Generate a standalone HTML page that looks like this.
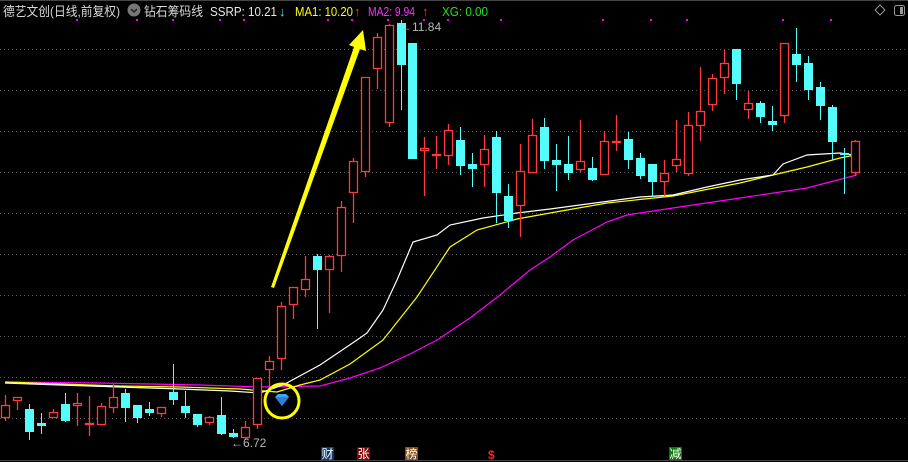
<!DOCTYPE html>
<html><head><meta charset="utf-8"><style>
html,body{margin:0;padding:0;background:#000;width:908px;height:462px;overflow:hidden}
svg{display:block}
text{font-family:"Liberation Sans","Noto Sans CJK SC",sans-serif}
</style></head><body>
<svg width="908" height="462" viewBox="0 0 908 462" xmlns="http://www.w3.org/2000/svg">
<rect width="908" height="462" fill="#000"/>
<line x1="0" y1="0.5" x2="908" y2="0.5" stroke="#444"/>
<line x1="0" y1="460.5" x2="908" y2="460.5" stroke="#444"/>
<g stroke="#555" stroke-dasharray="1,3">
<line x1="0" y1="49.5" x2="908" y2="49.5"/><line x1="0" y1="90.5" x2="908" y2="90.5"/>
<line x1="0" y1="131.5" x2="908" y2="131.5"/><line x1="0" y1="172.5" x2="908" y2="172.5"/>
<line x1="0" y1="213.5" x2="908" y2="213.5"/><line x1="0" y1="254.5" x2="908" y2="254.5"/>
<line x1="0" y1="295.5" x2="908" y2="295.5"/><line x1="0" y1="336.5" x2="908" y2="336.5"/>
<line x1="0" y1="377.5" x2="908" y2="377.5"/><line x1="0" y1="418.5" x2="908" y2="418.5"/>
</g>
<!-- header -->
<text x="3" y="16" fill="#d8d8d8" font-size="13" textLength="117" lengthAdjust="spacingAndGlyphs">德艺文创(日线,前复权)</text>
<circle cx="134" cy="10" r="6.5" fill="#777"/>
<polyline points="131,9 134,12 137,9" fill="none" stroke="#222" stroke-width="1.5"/>
<text x="144" y="16" fill="#d8d8d8" font-size="13" textLength="59" lengthAdjust="spacingAndGlyphs">钻石筹码线</text>
<text x="210" y="16" fill="#e8e8e8" font-size="13" textLength="67" lengthAdjust="spacingAndGlyphs">SSRP: 10.21</text>
<text x="279" y="16" fill="#54e8f0" font-size="13">↓</text>
<text x="295" y="16" fill="#ffff00" font-size="13" textLength="58" lengthAdjust="spacingAndGlyphs">MA1: 10.20</text>
<text x="354" y="16" fill="#ff3030" font-size="13">↑</text>
<text x="368" y="16" fill="#ff30ff" font-size="13" textLength="47" lengthAdjust="spacingAndGlyphs">MA2: 9.94</text>
<text x="422" y="16" fill="#ff3030" font-size="13">↑</text>
<text x="442" y="16" fill="#20e020" font-size="13" textLength="46" lengthAdjust="spacingAndGlyphs">XG: 0.00</text>
<g fill="#ff00ff">
<rect x="76" y="19" width="2" height="2"/><rect x="136" y="19" width="2" height="2"/><rect x="172" y="19" width="2" height="2"/><rect x="219" y="19" width="2" height="2"/><rect x="243" y="19" width="2" height="2"/><rect x="327" y="19" width="2" height="2"/><rect x="351" y="19" width="2" height="2"/><rect x="387" y="19" width="2" height="2"/><rect x="423" y="19" width="2" height="2"/><rect x="447" y="19" width="2" height="2"/><rect x="500" y="19" width="2" height="2"/><rect x="602" y="19" width="2" height="2"/><rect x="650" y="19" width="2" height="2"/><rect x="686" y="19" width="2" height="2"/><rect x="782" y="19" width="2" height="2"/><rect x="830" y="19" width="2" height="2"/>
</g>
<polygon points="880,5 885,10 880,15 875,10" fill="none" stroke="#999"/>
<rect x="894.5" y="5.5" width="10" height="10" rx="2" fill="none" stroke="#999"/>
<rect x="900" y="7" width="3" height="7" fill="#999"/>
<!-- MA lines -->
<polyline fill="none" stroke="#ff00ff" stroke-width="1.2" points="5,382 100,383 150,384 200,385 260,387 320,386 350,378 380,368 410,354 437,340 470,318 500,295 530,270 550,257 573,240 607,222 627,215 673,208 740,198 807,188 853,176 857,174"/>
<polyline fill="none" stroke="#ffff00" stroke-width="1.2" points="5,382 60,384 120,386 180,387 240,389 277,392 300,385 320,380 350,364 383,340 417,297 450,247 477,230 517,219 550,213 607,203 673,196 740,183 773,175 807,167 840,158 855,155"/>
<polyline fill="none" stroke="#ffffff" stroke-width="1.2" points="5,383 60,385 120,387 180,389 230,391 260,393 283,385 320,365 357,340 367,333 383,310 397,280 413,242 437,235 450,225 483,218 517,213 550,209 640,197 673,195 707,187 740,180 773,175 783,164 807,155 823,154 840,153 853,155"/>
<!-- candles -->
<g stroke-width="1.3">
<g stroke="#ff3a3a" fill="#000">
<line x1="5.5" y1="395" x2="5.5" y2="421"/><rect x="1.5" y="405.5" width="8" height="12"/>
<line x1="17.5" y1="397" x2="17.5" y2="410"/><rect x="13.5" y="397.5" width="8" height="3"/>
<line x1="53.5" y1="409" x2="53.5" y2="418"/><rect x="49.5" y="412.5" width="8" height="5"/>
<line x1="77.5" y1="393" x2="77.5" y2="426"/><rect x="73.5" y="403.5" width="8" height="2"/>
<line x1="89.5" y1="396" x2="89.5" y2="436"/><rect x="85.5" y="423.5" width="8" height="1"/>
<line x1="101.5" y1="403" x2="101.5" y2="425"/><rect x="97.5" y="406.5" width="8" height="18"/>
<line x1="113.5" y1="384" x2="113.5" y2="413"/><rect x="109.5" y="397.5" width="8" height="10"/>
<line x1="161.5" y1="407" x2="161.5" y2="417"/><rect x="157.5" y="407.5" width="8" height="6"/>
<line x1="209.5" y1="416" x2="209.5" y2="425"/><rect x="205.5" y="417.5" width="8" height="5"/>
<line x1="245.5" y1="421" x2="245.5" y2="440"/><rect x="241.5" y="427.5" width="8" height="10"/>
<line x1="257.5" y1="378" x2="257.5" y2="429"/><rect x="253.5" y="378.5" width="8" height="46"/>
<line x1="269.5" y1="356" x2="269.5" y2="388"/><rect x="265.5" y="361.5" width="8" height="8"/>
<line x1="281.5" y1="302" x2="281.5" y2="370"/><rect x="277.5" y="306.5" width="8" height="52"/>
<line x1="293.5" y1="287" x2="293.5" y2="319"/><rect x="289.5" y="287.5" width="8" height="17"/>
<line x1="305.5" y1="256" x2="305.5" y2="297"/><rect x="301.5" y="279.5" width="8" height="10"/>
<line x1="329.5" y1="255" x2="329.5" y2="313"/><rect x="325.5" y="256.5" width="8" height="13"/>
<line x1="341.5" y1="201" x2="341.5" y2="272"/><rect x="337.5" y="207.5" width="8" height="48"/>
<line x1="353.5" y1="158" x2="353.5" y2="223"/><rect x="349.5" y="161.5" width="8" height="31"/>
<line x1="365.5" y1="77" x2="365.5" y2="177"/><rect x="361.5" y="77.5" width="8" height="94"/>
<line x1="377.5" y1="33" x2="377.5" y2="89"/><rect x="373.5" y="37.5" width="8" height="31"/>
<line x1="389.5" y1="24" x2="389.5" y2="127"/><rect x="385.5" y="25.5" width="8" height="97"/>
<line x1="424.5" y1="137" x2="424.5" y2="196"/><rect x="420.5" y="148.5" width="8" height="2"/>
<line x1="436.5" y1="136" x2="436.5" y2="169"/><rect x="432.5" y="154.5" width="8" height="1"/>
<line x1="448.5" y1="124" x2="448.5" y2="165"/><rect x="444.5" y="130.5" width="8" height="25"/>
<line x1="484.5" y1="135" x2="484.5" y2="187"/><rect x="480.5" y="149.5" width="8" height="15"/>
<line x1="520.5" y1="144" x2="520.5" y2="237"/><rect x="516.5" y="171.5" width="8" height="34"/>
<line x1="532.5" y1="119" x2="532.5" y2="172"/><rect x="528.5" y="135.5" width="8" height="37"/>
<line x1="580.5" y1="120" x2="580.5" y2="172"/><rect x="576.5" y="161.5" width="8" height="8"/>
<line x1="604.5" y1="131" x2="604.5" y2="174"/><rect x="600.5" y="141.5" width="8" height="33"/>
<line x1="616.5" y1="115" x2="616.5" y2="151"/><rect x="612.5" y="141.5" width="8" height="1"/>
<line x1="664.5" y1="160" x2="664.5" y2="196"/><rect x="660.5" y="173.5" width="8" height="8"/>
<line x1="676.5" y1="120" x2="676.5" y2="172"/><rect x="672.5" y="159.5" width="8" height="6"/>
<line x1="688.5" y1="112" x2="688.5" y2="176"/><rect x="684.5" y="125.5" width="8" height="48"/>
<line x1="700.5" y1="67" x2="700.5" y2="141"/><rect x="696.5" y="111.5" width="8" height="14"/>
<line x1="712.5" y1="74" x2="712.5" y2="111"/><rect x="708.5" y="78.5" width="8" height="26"/>
<line x1="724.5" y1="50" x2="724.5" y2="94"/><rect x="720.5" y="63.5" width="8" height="14"/>
<line x1="748.5" y1="91" x2="748.5" y2="119"/><rect x="744.5" y="103.5" width="8" height="6"/>
<line x1="784.5" y1="43" x2="784.5" y2="123"/><rect x="780.5" y="43.5" width="8" height="72"/>
<line x1="855.5" y1="140" x2="855.5" y2="176"/><rect x="851.5" y="141.5" width="8" height="31"/>
</g>
<g stroke="#54fcfc" fill="#54fcfc" stroke-width="1">
<line x1="29.5" y1="404" x2="29.5" y2="440"/><rect x="25.5" y="409.5" width="8" height="22"/>
<line x1="41.5" y1="413" x2="41.5" y2="434"/><rect x="37.5" y="423.5" width="8" height="2"/>
<line x1="65.5" y1="393" x2="65.5" y2="422"/><rect x="61.5" y="404.5" width="8" height="16"/>
<line x1="125.5" y1="389" x2="125.5" y2="422"/><rect x="121.5" y="393.5" width="8" height="14"/>
<line x1="137.5" y1="405" x2="137.5" y2="423"/><rect x="133.5" y="405.5" width="8" height="12"/>
<line x1="149.5" y1="402" x2="149.5" y2="416"/><rect x="145.5" y="409.5" width="8" height="3"/>
<line x1="173.5" y1="364" x2="173.5" y2="405"/><rect x="169.5" y="392.5" width="8" height="7"/>
<line x1="185.5" y1="391" x2="185.5" y2="418"/><rect x="181.5" y="406.5" width="8" height="6"/>
<line x1="197.5" y1="414" x2="197.5" y2="427"/><rect x="193.5" y="414.5" width="8" height="10"/>
<line x1="221.5" y1="397" x2="221.5" y2="435"/><rect x="217.5" y="415.5" width="8" height="18"/>
<line x1="233.5" y1="429" x2="233.5" y2="438"/><rect x="229.5" y="433.5" width="8" height="3"/>
<line x1="317.5" y1="254" x2="317.5" y2="329"/><rect x="313.5" y="256.5" width="8" height="13"/>
<line x1="401.5" y1="20" x2="401.5" y2="110"/><rect x="397.5" y="23.5" width="8" height="41"/>
<line x1="412.5" y1="43" x2="412.5" y2="158"/><rect x="408.5" y="43.5" width="8" height="115"/>
<line x1="460.5" y1="127" x2="460.5" y2="175"/><rect x="456.5" y="140.5" width="8" height="25"/>
<line x1="472.5" y1="153" x2="472.5" y2="187"/><rect x="468.5" y="164.5" width="8" height="4"/>
<line x1="496.5" y1="131" x2="496.5" y2="223"/><rect x="492.5" y="137.5" width="8" height="55"/>
<line x1="508.5" y1="184" x2="508.5" y2="228"/><rect x="504.5" y="196.5" width="8" height="24"/>
<line x1="544.5" y1="118" x2="544.5" y2="169"/><rect x="540.5" y="127.5" width="8" height="33"/>
<line x1="556.5" y1="144" x2="556.5" y2="191"/><rect x="552.5" y="160.5" width="8" height="4"/>
<line x1="568.5" y1="136" x2="568.5" y2="180"/><rect x="564.5" y="164.5" width="8" height="8"/>
<line x1="592.5" y1="157" x2="592.5" y2="181"/><rect x="588.5" y="168.5" width="8" height="11"/>
<line x1="628.5" y1="132" x2="628.5" y2="169"/><rect x="624.5" y="139.5" width="8" height="20"/>
<line x1="640.5" y1="153" x2="640.5" y2="179"/><rect x="636.5" y="158.5" width="8" height="17"/>
<line x1="652.5" y1="164" x2="652.5" y2="197"/><rect x="648.5" y="164.5" width="8" height="17"/>
<line x1="736.5" y1="49" x2="736.5" y2="100"/><rect x="732.5" y="49.5" width="8" height="34"/>
<line x1="760.5" y1="101" x2="760.5" y2="123"/><rect x="756.5" y="103.5" width="8" height="13"/>
<line x1="772.5" y1="106" x2="772.5" y2="131"/><rect x="768.5" y="121.5" width="8" height="3"/>
<line x1="796.5" y1="28" x2="796.5" y2="82"/><rect x="792.5" y="54.5" width="8" height="10"/>
<line x1="808.5" y1="56" x2="808.5" y2="100"/><rect x="804.5" y="63.5" width="8" height="26"/>
<line x1="820.5" y1="82" x2="820.5" y2="120"/><rect x="816.5" y="87.5" width="8" height="18"/>
<line x1="832.5" y1="105" x2="832.5" y2="160"/><rect x="828.5" y="107.5" width="8" height="34"/>
<line x1="844.5" y1="148" x2="844.5" y2="194"/><rect x="840.5" y="153.5" width="8" height="1"/>
</g>
</g>
<!-- arrow -->
<polygon points="271,287 354,47 349,45 363,30 366,51 360,49 274,288" fill="#ffff00"/>
<!-- labels -->
<text x="400" y="31" fill="#b8b8b8" font-size="12">←11.84</text>
<text x="231" y="447" fill="#b8b8b8" font-size="12">←6.72</text>
<!-- diamond signal -->
<circle cx="282" cy="401" r="17" fill="none" stroke="#ffff00" stroke-width="3"/>
<polygon points="275,397 278,394 286,394 289,397 282,406" fill="#3fa8f0"/>
<polygon points="275,397 289,397 282,406" fill="#2a7fd8"/>
<!-- bottom badges -->
<rect x="321" y="447" width="13" height="13" fill="#0d3c70"/>
<text x="321.5" y="458" fill="#fff" font-size="12">财</text>
<rect x="357" y="447" width="13" height="13" fill="#8a0000"/>
<text x="357.5" y="458" fill="#fff" font-size="12">张</text>
<rect x="405" y="447" width="13" height="13" fill="#8a4a10"/>
<text x="405.5" y="458" fill="#fff" font-size="12">榜</text>
<text x="488" y="459" fill="#ff2020" font-size="12" font-weight="bold">$</text>
<rect x="669" y="447" width="13" height="13" fill="#0a7a0a"/>
<text x="669.5" y="458" fill="#fff" font-size="12">减</text>
</svg>
</body></html>
